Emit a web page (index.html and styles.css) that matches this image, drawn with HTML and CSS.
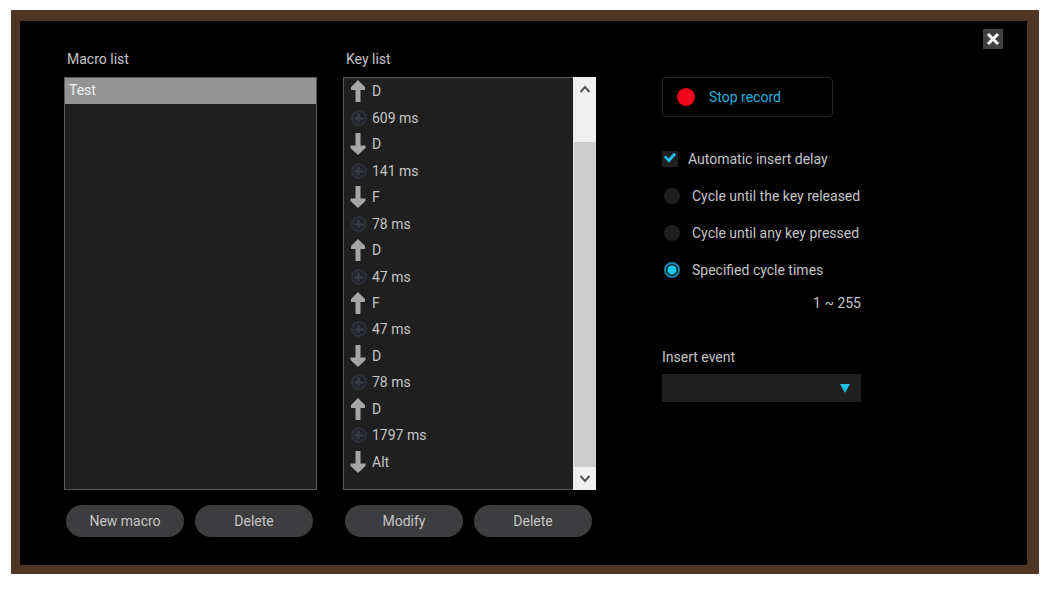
FILE: index.html
```html
<!DOCTYPE html>
<html lang="en">
    <head>
        <meta charset="UTF-8" />
        <meta name="viewport" content="width=device-width, initial-scale=1.0" />
        <title>Macro editor</title>
        <link rel="stylesheet" href="styles.css">
    </head>
    <body>
        <svg class="symbols" aria-hidden="true">
            <symbol id="up" viewBox="0 0 16 22">
                <path d="M8 0 15 7V10H10.500V22H5.500V10H1V7Z" />
            </symbol>
            <symbol id="down" viewBox="0 0 16 22">
                <path d="M8 22 15.500 15V12.500H10.500V0H5.500V12.500H.5V15Z" />
            </symbol>
            <symbol id="delay" viewBox="0 0 16 16">
                <circle cx="8" cy="8" r="7" fill="#22242a" stroke="#2d3039" stroke-width="2" />
                <path d="M7.500 3.500V12M3.500 8.500H13" fill="none" stroke="#3a3e48" stroke-width="2" />
            </symbol>
        </svg>

        <main class="window">
            <button class="close" type="button" aria-label="Close">
                <svg viewBox="0 0 20 20" width="20" height="20">
                    <path d="M5 5 15 15M15 5 5 15" />
                </svg>
            </button>

            <section class="column">
                <h2>Macro list</h2>
                <ul class="list">
                    <li class="macro selected">Test</li>
                </ul>
                <div class="buttons">
                    <button type="button">New macro</button>
                    <button type="button">Delete</button>
                </div>
            </section>

            <section class="column">
                <h2>Key list</h2>
                <div class="list key-list">
                    <ul class="keys">
                        <li><svg class="arrow"><use href="#up" /></svg>D</li>
                        <li><svg class="clock"><use href="#delay" /></svg>609 ms</li>
                        <li><svg class="arrow"><use href="#down" /></svg>D</li>
                        <li><svg class="clock"><use href="#delay" /></svg>141 ms</li>
                        <li><svg class="arrow"><use href="#down" /></svg>F</li>
                        <li><svg class="clock"><use href="#delay" /></svg>78 ms</li>
                        <li><svg class="arrow"><use href="#up" /></svg>D</li>
                        <li><svg class="clock"><use href="#delay" /></svg>47 ms</li>
                        <li><svg class="arrow"><use href="#up" /></svg>F</li>
                        <li><svg class="clock"><use href="#delay" /></svg>47 ms</li>
                        <li><svg class="arrow"><use href="#down" /></svg>D</li>
                        <li><svg class="clock"><use href="#delay" /></svg>78 ms</li>
                        <li><svg class="arrow"><use href="#up" /></svg>D</li>
                        <li><svg class="clock"><use href="#delay" /></svg>1797 ms</li>
                        <li><svg class="arrow"><use href="#down" /></svg>Alt</li>
                    </ul>
                    <div class="scrollbar">
                        <button type="button" aria-label="Scroll up">
                            <svg viewBox="0 0 12 10" width="12" height="10">
                                <path d="M1.500 8 6 3 10.500 8" />
                            </svg>
                        </button>
                        <div class="thumb"></div>
                        <button type="button" aria-label="Scroll down">
                            <svg viewBox="0 0 12 10" width="12" height="10">
                                <path d="M1.500 2 6 7 10.500 2" />
                            </svg>
                        </button>
                    </div>
                </div>
                <div class="buttons">
                    <button type="button">Modify</button>
                    <button type="button">Delete</button>
                </div>
            </section>

            <form class="settings">
                <button class="record" type="button">
                    <span class="dot"></span>Stop record
                </button>
                <div class="option check">
                    <input id="delay-on" type="checkbox" checked />
                    <label for="delay-on">Automatic insert delay</label>
                </div>
                <div class="option">
                    <input id="released" name="cycle" type="radio" />
                    <label for="released">Cycle until the key released</label>
                </div>
                <div class="option">
                    <input id="pressed" name="cycle" type="radio" />
                    <label for="pressed">Cycle until any key pressed</label>
                </div>
                <div class="option">
                    <input id="times" name="cycle" type="radio" checked />
                    <label for="times">Specified cycle times</label>
                </div>
                <p class="range">1 ~ 255</p>
                <label class="event-label" for="event">Insert event</label>
                <div class="select">
                    <select id="event">
                        <option></option>
                    </select>
                </div>
            </form>
        </main>
    </body>
</html>
```

FILE: styles.css
```css
* {
    box-sizing: border-box;
}
body {
    display: flex;
    min-height: 100vh;
    margin: 0;
    padding: 10px 11px 15px;
    background-color: white;
}
body,
button,
select {
    font-family: Roboto, "Liberation Sans", sans-serif;
    font-size: 14px;
    line-height: 20px;
}
h2,
p,
ul {
    margin: 0;
    padding: 0;
    list-style: none;
}
button {
    padding: 0;
    border: 0;
}
.symbols {
    position: absolute;
    width: 0;
    height: 0;
}

.window {
    position: relative;
    flex: 1;
    display: grid;
    grid-template-columns: 253fr 253fr 381fr;
    gap: 26px;
    padding: 28px 24px 28px 44px;
    border: solid #4f3526;
    border-width: 11px 12px 9px 9px;
    background-color: black;
    color: #c4c4c4;
}
.close {
    position: absolute;
    top: 8px;
    right: 24px;
    width: 20px;
    height: 20px;
    background-color: #404040;
}
.close svg {
    display: block;
    fill: none;
    stroke: white;
    stroke-width: 3;
}

/* Macro list and key list */
.column {
    display: flex;
    flex-direction: column;
}
h2 {
    padding-left: 3px;
    margin-bottom: 8px;
    font-size: 14px;
    font-weight: 400;
}
.list {
    flex: 1;
    border: 1px solid #5a5a5a;
    background-color: #1f1f1f;
}
.macro {
    padding: 2px 4px 4px;
}
.selected {
    background-color: #949494;
    color: #f2f2f2;
}
.key-list {
    display: flex;
    border-right: 0;
}
.keys {
    flex: 1;
    display: flex;
    flex-direction: column;
    padding: 0 6px 14px;
}
.keys li {
    flex: 1;
    display: flex;
    align-items: center;
    gap: 6px;
}
.arrow {
    width: 16px;
    height: 22px;
    fill: #a6a6a6;
}
.clock {
    width: 16px;
    height: 16px;
    margin-left: 1px;
    margin-right: -1px;
}
.scrollbar {
    display: flex;
    flex-direction: column;
    width: 23px;
    margin: -1px 0;
    border-left: 1px solid #e8e8e8;
    background-color: #f0f0f0;
}
.scrollbar button {
    height: 23px;
    background-color: #f0f0f0;
}
.scrollbar svg {
    fill: none;
    stroke: #555;
    stroke-width: 2;
}
.thumb {
    flex: 1;
    margin-top: 42px;
    background-color: #cdcdcd;
}

.buttons {
    display: flex;
    gap: 11px;
    margin-top: 15px;
    padding: 0 4px 0 2px;
}
.buttons button {
    flex: 1;
    height: 32px;
    border-radius: 16px;
    background-color: #3d3d3f;
    color: #c4c4c4;
}

/* Recording options */
.settings {
    display: flex;
    flex-direction: column;
    width: 239px;
    padding: 28px 0 0 40px;
}
.record {
    display: flex;
    align-items: center;
    gap: 14px;
    width: 171px;
    height: 40px;
    margin-bottom: 23px;
    padding-left: 14px;
    border: 1px solid #262626;
    border-radius: 4px;
    background-color: black;
    color: #1fb2dc;
}
.dot {
    width: 18px;
    height: 18px;
    border-radius: 50%;
    background-color: #f0051c;
}
.option {
    display: flex;
    align-items: center;
    gap: 12px;
    height: 37px;
    padding-left: 2px;
    white-space: nowrap;
}
.option input {
    flex: none;
    appearance: none;
    width: 16px;
    height: 16px;
    margin: 0;
    border-radius: 50%;
    background-color: #1f1f1f;
}
.option input[type="radio"]:checked {
    border: 2px solid #1a86ad;
    background: radial-gradient(circle, #19c8f0 4px, #06222c 5px);
}
.check {
    gap: 10px;
    padding-left: 0;
}
.check input {
    border-radius: 0;
}
.check input:checked::before {
    content: "";
    display: block;
    width: 16px;
    height: 16px;
    background-color: #22bdea;
    clip-path: polygon(12% 42%, 24% 32%, 42% 50%, 74% 14%, 88% 26%, 43% 76%);
}
.range {
    margin: 5px 0 34px;
    text-align: right;
}
.event-label {
    margin-bottom: 7px;
}
.select {
    position: relative;
}
.select::after {
    content: "";
    position: absolute;
    top: 10px;
    right: 11px;
    border: solid transparent;
    border-width: 9px 5px 0;
    border-top-color: #1cbfe6;
    pointer-events: none;
}
select {
    display: block;
    appearance: none;
    width: 100%;
    height: 28px;
    padding: 0 28px 0 8px;
    border: 0;
    border-radius: 0;
    background-color: #1f1f1f;
    color: #c4c4c4;
}
```
